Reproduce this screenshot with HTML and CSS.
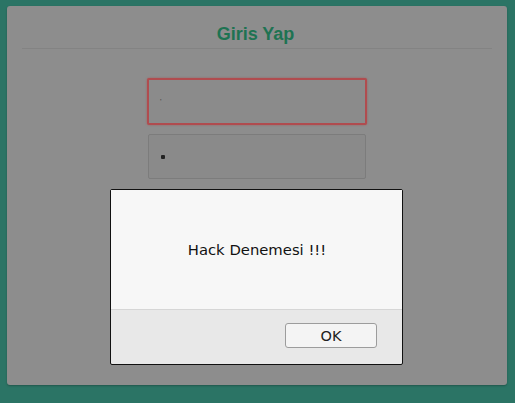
FILE: index.html
```html
<!DOCTYPE html>
<html>
<head>
<meta charset="utf-8">
<link rel="stylesheet" href="styles.css">
</head>
<body>
<div class="card">
  <h1 class="title">Giris Yap</h1>
  <div class="form">
    <div class="field field-error"><span class="caret">'</span></div>
    <div class="field field-pass"><span class="dot"></span></div>
  </div>
</div>
<div class="dialog">
  <div class="dialog-body">Hack Denemesi !!!</div>
  <div class="dialog-foot"><button class="ok">OK</button></div>
</div>
</body>
</html>
```
FILE: styles.css
```css
html, body { margin: 0; padding: 0; }
body {
  width: 515px;
  height: 403px;
  background: #2b7465;
  position: relative;
  overflow: hidden;
  font-family: "Liberation Sans", Arial, sans-serif;
}
.card {
  position: relative;
  margin: 6px 0 0 7px;
  width: 500px;
  height: 379px;
  background: #8d8d8d;
  border-radius: 3px;
  box-shadow: 0 1px 2px rgba(0,0,0,0.25);
  box-sizing: border-box;
  padding: 0 15px;
}
.title {
  margin: 0;
  padding-top: 17px;
  padding-right: 3px;
  height: 25px;
  font-size: 18px;
  font-weight: bold;
  color: #1e7352;
  text-align: center;
  line-height: 22px;
  border-bottom: 1px solid #838383;
}
.form {
  display: flex;
  flex-direction: column;
  align-items: center;
  padding-top: 29px;
  gap: 9px;
}
.field {
  box-sizing: border-box;
  width: 220px;
  height: 47px;
  border: 1px solid #7c7c7c;
  border-radius: 2px;
  background: #8a8a8a;
  display: flex;
  align-items: center;
  padding-left: 11px;
}
.field-error {
  border: 2px solid #b04c4f;
  box-shadow: 0 0 2px rgba(176,60,60,0.6);
  background: #8b8b8b;
}
.field-pass {
  width: 218px;
  height: 45px;
  padding-left: 12px;
}
.caret {
  font-size: 8px;
  color: #444;
  line-height: 1;
}
.dot {
  width: 4px;
  height: 4px;
  border-radius: 1px;
  background: #222;
}
.dialog {
  position: absolute;
  left: 110px;
  top: 189px;
  width: 293px;
  height: 176px;
  box-sizing: border-box;
  border: 1px solid #111;
  border-radius: 2px;
  background: #e8e8e8;
  display: flex;
  flex-direction: column;
  font-family: "DejaVu Sans", sans-serif;
}
.dialog-body {
  height: 119px;
  background: #f7f7f7;
  border-bottom: 1px solid #d6d6d6;
  display: flex;
  align-items: center;
  justify-content: center;
  font-size: 14.8px;
  color: #111;
  padding-left: 1px;
}
.dialog-foot {
  flex: 1;
  display: flex;
  justify-content: flex-end;
  align-items: flex-start;
  padding: 13px 25px 0 0;
}
.ok {
  width: 92px;
  height: 25px;
  box-sizing: border-box;
  border: 1px solid #9c9c9c;
  border-radius: 3px;
  background: #f4f4f4;
  font-family: "DejaVu Sans", sans-serif;
  font-size: 14.5px;
  color: #222;
  padding: 0;
}
```
